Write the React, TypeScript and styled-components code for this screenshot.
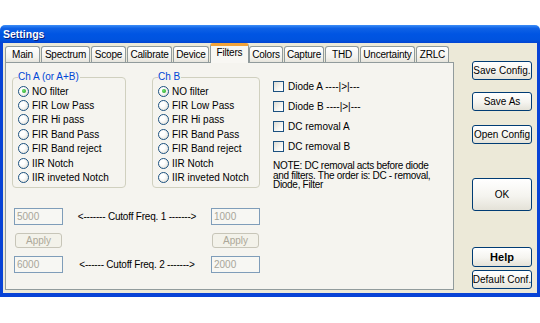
import React from "react";
import styled, { createGlobalStyle } from "styled-components";

const GlobalStyle = createGlobalStyle`
  body {
    margin: 0;
    background: #ffffff;
    font-family: "Liberation Sans", Arial, sans-serif;
  }
`;

const Window = styled.div`
  width: 540px;
  height: 272px;
  margin-top: 25px;
  display: flex;
  flex-direction: column;
  box-sizing: border-box;
`;

const TitleBar = styled.div`
  height: 18px;
  flex: none;
  border-radius: 5px 5px 0 0;
  background: linear-gradient(
    180deg,
    #3d8ef7 0%,
    #0f62e6 18%,
    #0055e3 50%,
    #0053df 82%,
    #0344d2 100%
  );
  color: #ffffff;
  font-size: 10.5px;
  font-weight: bold;
  line-height: 18px;
  padding-left: 3px;
  text-shadow: 1px 1px 0 #0a1f7a;
`;

const Frame = styled.div`
  flex: 1;
  display: flex;
  background: #ece9d8;
  border: 3px solid #0843d6;
  border-top: none;
  border-bottom-width: 4px;
  padding: 0 5px 0 2px;
`;

const TabArea = styled.div`
  width: 449px;
  display: flex;
  flex-direction: column;
`;

const TabStrip = styled.div`
  height: 19px;
  display: flex;
  align-items: flex-end;
  position: relative;
  z-index: 1;
`;

const Tab = styled.div<{ $w: number; $active?: boolean }>`
  box-sizing: border-box;
  width: ${(p) => p.$w}px;
  height: ${(p) => (p.$active ? 20 : 16)}px;
  margin-right: ${(p) => (p.$active ? 0 : 1)}px;
  margin-bottom: ${(p) => (p.$active ? -1 : 0)}px;
  border: 1px solid #919b9c;
  border-bottom: none;
  border-top: ${(p) => (p.$active ? "3px solid #f2a33a" : "1px solid #919b9c")};
  border-radius: 3px 3px 0 0;
  background: ${(p) =>
    p.$active
      ? "#f8f7f3"
      : "linear-gradient(180deg, #ffffff 0%, #f3f2ed 70%, #e6e4dc 100%)"};
  font-size: 10px;
  letter-spacing: -0.2px;
  color: #000000;
  text-align: center;
  line-height: ${(p) => (p.$active ? 14 : 15)}px;
  white-space: nowrap;
`;

const Panel = styled.div`
  height: 228px;
  box-sizing: border-box;
  border: 1px solid #919b9c;
  background: #f5f4ef;
  padding: 8px 0 0 6px;
  display: flex;
  flex-direction: column;
`;

const TopRow = styled.div`
  height: 117px;
  display: flex;
  align-items: flex-start;
`;

const GroupBox = styled.fieldset<{ $w: number; $ml?: number }>`
  box-sizing: border-box;
  width: ${(p) => p.$w}px;
  height: 117px;
  margin: 0 0 0 ${(p) => p.$ml || 0}px;
  padding: 1px 0 2px 5px;
  border: 1px solid #d0d0bf;
  border-radius: 4px;
`;

const Legend = styled.legend`
  padding: 0 1px 0 0;
  margin-left: 0;
  font-size: 10px;
  line-height: 12px;
  color: #0046d5;
`;

const OptionRow = styled.div`
  height: 14.4px;
  display: flex;
  align-items: center;
  gap: 3px;
  font-size: 10px;
  color: #000000;
  white-space: nowrap;
`;

const Radio = styled.span<{ $on?: boolean }>`
  box-sizing: border-box;
  width: 11px;
  height: 11px;
  flex: none;
  border-radius: 50%;
  border: 1px solid #1c5180;
  background: radial-gradient(circle at 35% 35%, #ffffff 30%, #dcdad0 100%);
  display: flex;
  align-items: center;
  justify-content: center;

  &::after {
    content: "";
    display: ${(p) => (p.$on ? "block" : "none")};
    width: 4px;
    height: 4px;
    border-radius: 50%;
    background: radial-gradient(circle at 40% 40%, #6ee26e, #1d9a1d);
  }
`;

const CheckColumn = styled.div`
  margin-left: 13px;
  padding-top: 5px;
  display: flex;
  flex-direction: column;
`;

const CheckRow = styled.div`
  height: 20px;
  display: flex;
  align-items: center;
  gap: 4px;
  font-size: 10px;
  color: #000000;
  white-space: nowrap;
`;

const CheckBox = styled.span`
  box-sizing: border-box;
  width: 11px;
  height: 11px;
  flex: none;
  border: 1px solid #1c5180;
  background: linear-gradient(135deg, #dcdbd3 0%, #f6f6f2 60%, #ffffff 100%);
`;

const Note = styled.div`
  margin-top: 5px;
  font-size: 10px;
  line-height: 9.5px;
  letter-spacing: -0.3px;
  color: #000000;
  white-space: nowrap;
`;

const FreqGrid = styled.div`
  margin: 20px 0 0 2px;
  display: grid;
  grid-template-columns: 49px 148px 49px;
  grid-template-rows: 17px 15px 17px;
  row-gap: 8px;
  align-items: center;
`;

const Field = styled.div`
  box-sizing: border-box;
  height: 17px;
  border: 1px solid #7f9db9;
  background: #f7f7f3;
  font-size: 10px;
  line-height: 15px;
  padding-left: 2px;
  color: #a8a699;
`;

const FreqLabel = styled.div`
  text-align: center;
  font-size: 10px;
  color: #000000;
  white-space: nowrap;
  letter-spacing: -0.2px;
`;

const DisabledButton = styled.div`
  box-sizing: border-box;
  width: 47px;
  height: 15px;
  margin-left: 1px;
  border: 1px solid #c7c5b8;
  border-radius: 3px;
  background: #f3f2ea;
  font-size: 10px;
  line-height: 13px;
  text-align: center;
  color: #aca899;
`;

const SideColumn = styled.div`
  width: 60px;
  margin-left: 18px;
  padding-top: 18px;
  display: flex;
  flex-direction: column;
`;

const Button = styled.div<{ $h?: number; $mt?: number; $bold?: boolean }>`
  box-sizing: border-box;
  height: ${(p) => p.$h || 19}px;
  margin-top: ${(p) => p.$mt || 0}px;
  border: 1px solid #003c74;
  border-radius: 3px;
  background: linear-gradient(180deg, #ffffff 0%, #f5f4ef 55%, #e4e2d8 100%);
  display: flex;
  align-items: center;
  justify-content: center;
  font-size: ${(p) => (p.$bold ? 11 : 10)}px;
  font-weight: ${(p) => (p.$bold ? "bold" : "normal")};
  color: #000000;
  white-space: nowrap;
`;

const tabs = [
  { label: "Main", w: 35 },
  { label: "Spectrum", w: 49 },
  { label: "Scope", w: 35 },
  { label: "Calibrate", w: 45 },
  { label: "Device", w: 36 },
  { label: "Filters", w: 39, active: true },
  { label: "Colors", w: 34 },
  { label: "Capture", w: 40 },
  { label: "THD", w: 34 },
  { label: "Uncertainty", w: 55 },
  { label: "ZRLC", w: 33 },
];

const filterOptions = [
  "NO filter",
  "FIR Low Pass",
  "FIR Hi pass",
  "FIR Band Pass",
  "FIR Band reject",
  "IIR Notch",
  "IIR inveted Notch",
];

const FilterGroup: React.FC<{ title: string; width: number; ml?: number }> = ({
  title,
  width,
  ml,
}) => (
  <GroupBox $w={width} $ml={ml}>
    <Legend>{title}</Legend>
    {filterOptions.map((opt, i) => (
      <OptionRow key={opt}>
        <Radio $on={i === 0} />
        {opt}
      </OptionRow>
    ))}
  </GroupBox>
);

const App: React.FC = () => {
  return (
    <>
      <GlobalStyle />
      <Window>
        <TitleBar>Settings</TitleBar>
        <Frame>
          <TabArea>
            <TabStrip>
              {tabs.map((t) => (
                <Tab key={t.label} $w={t.w} $active={t.active}>
                  {t.label}
                </Tab>
              ))}
            </TabStrip>
            <Panel>
              <TopRow>
                <FilterGroup title="Ch A (or A+B)" width={114} />
                <FilterGroup title="Ch B" width={108} ml={26} />
                <CheckColumn>
                  <CheckRow>
                    <CheckBox />
                    Diode A ----|&gt;|---
                  </CheckRow>
                  <CheckRow>
                    <CheckBox />
                    Diode B ----|&gt;|---
                  </CheckRow>
                  <CheckRow>
                    <CheckBox />
                    DC removal A
                  </CheckRow>
                  <CheckRow>
                    <CheckBox />
                    DC removal B
                  </CheckRow>
                  <Note>
                    NOTE: DC removal acts before diode
                    <br />
                    and filters. The order is: DC - removal,
                    <br />
                    Diode, Filter
                  </Note>
                </CheckColumn>
              </TopRow>
              <FreqGrid>
                <Field>5000</Field>
                <FreqLabel>&lt;------- Cutoff Freq. 1 -------&gt;</FreqLabel>
                <Field>1000</Field>
                <DisabledButton>Apply</DisabledButton>
                <span />
                <DisabledButton>Apply</DisabledButton>
                <Field>6000</Field>
                <FreqLabel>&lt;------ Cutoff Freq. 2 -------&gt;</FreqLabel>
                <Field>2000</Field>
              </FreqGrid>
            </Panel>
          </TabArea>
          <SideColumn>
            <Button>Save Config.</Button>
            <Button $mt={12}>Save As</Button>
            <Button $mt={14}>Open Config</Button>
            <Button $mt={34} $h={33}>
              OK
            </Button>
            <Button $mt={36} $h={20} $bold>
              Help
            </Button>
            <Button $mt={3}>Default Conf.</Button>
          </SideColumn>
        </Frame>
      </Window>
    </>
  );
};

export default App;
